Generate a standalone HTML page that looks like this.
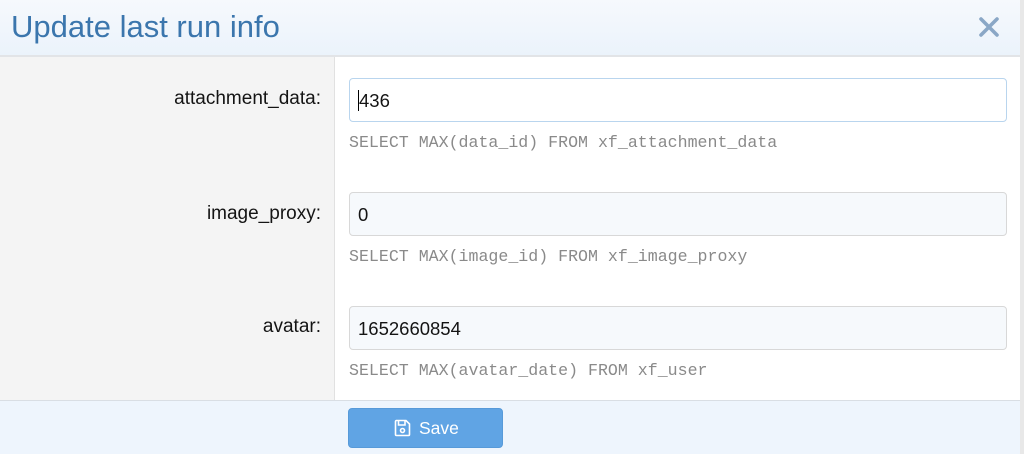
<!DOCTYPE html>
<html><head><style>
*{box-sizing:border-box;margin:0;padding:0}
body{width:1024px;height:454px;overflow:hidden;background:#fff;font-family:"Liberation Sans",Arial,sans-serif;position:relative}
.hd{position:absolute;left:0;top:0;width:1024px;height:57px;background:linear-gradient(#f6f9fd,#ebf3fb);border-bottom:2px solid #e2e4e7}
.hd h1{position:absolute;left:11px;top:9px;font-weight:normal;font-size:31px;color:#3b76ad}
.x{position:absolute;left:977px;top:15px;width:24px;height:24px}
.side{position:absolute;left:0;top:57px;width:335px;height:344px;background:#f4f4f4;border-right:1px solid #e1e1e1}
.lbl{position:absolute;right:703px;font-size:19px;color:#141414}
.in{position:absolute;left:349px;width:658px;height:44px;border:1px solid #d8d8d8;border-radius:4px;background:#f6f9fc;font-size:18.5px;color:#141414;padding:11px 8px}
.in.f{border-color:#b9d5ee;background:#fff}
.h{position:absolute;left:349px;font-family:"Liberation Mono",monospace;font-size:16.6px;color:#8a8a8a}
.ft{position:absolute;left:0;top:400px;width:1024px;height:54px;background:#eef5fd;border-top:1px solid #d9dee4}
.btn{position:absolute;left:348px;top:408px;width:155px;height:40px;background:#60a4e4;border-radius:4px;border:1px solid #579ad9;color:#fff;font-size:17.5px}
.edge{position:absolute;left:1020px;top:0;width:4px;height:454px;background:#e8e8e8}
</style></head><body>
<div class="hd"><h1>Update last run info</h1>
<svg class="x" viewBox="0 0 24 24"><path d="M4 4L20 20M20 4L4 20" stroke="#8aa7c6" stroke-width="3.6" stroke-linecap="round"/></svg></div>
<div class="side"></div>
<div class="lbl" style="top:88px">attachment_data:</div>
<div class="in f" style="top:78px"><span style="border-left:1px solid #000">436</span></div>
<div class="h" style="top:133px">SELECT MAX(data_id) FROM xf_attachment_data</div>
<div class="lbl" style="top:203px">image_proxy:</div>
<div class="in" style="top:192px">0</div>
<div class="h" style="top:247px">SELECT MAX(image_id) FROM xf_image_proxy</div>
<div class="lbl" style="top:316px">avatar:</div>
<div class="in" style="top:306px">1652660854</div>
<div class="h" style="top:361px">SELECT MAX(avatar_date) FROM xf_user</div>
<div class="ft"></div>
<div class="btn"><svg style="position:absolute;left:45px;top:10px" width="17" height="18" viewBox="0 0 17 18"><path d="M2 1.5H12L15.5 5V15.5a1 1 0 0 1-1 1H2.5a1 1 0 0 1-1-1V2.5a1 1 0 0 1 1-1z M4.5 1.5V6H11V1.5" fill="none" stroke="#fff" stroke-width="1.6"/><circle cx="8.5" cy="11.5" r="2" fill="none" stroke="#fff" stroke-width="1.6"/></svg><span style="position:absolute;left:70px;top:9px">Save</span></div>
<div class="edge"></div>
</body></html>
